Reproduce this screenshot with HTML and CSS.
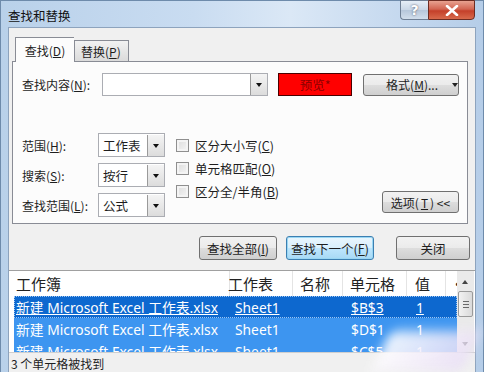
FILE: index.html
```html
<!DOCTYPE html>
<html lang="zh-CN">
<head>
  <meta charset="UTF-8">
  <title>查找和替换</title>
  <link rel="stylesheet" href="styles.css">
</head>
<body>
  <div class="window">
    <!-- Title bar -->
    <div class="titlebar">
      <span class="title">查找和替换</span>
      <div class="caption-btns">
        <div class="cap help">?</div>
        <div class="cap close">
          <svg width="14" height="11" viewBox="0 0 14 11"><path d="M2 1 L12 10 M12 1 L2 10" stroke="#fff" stroke-width="2.6" stroke-linecap="round"/></svg>
        </div>
      </div>
    </div>

    <div class="client">
      <!-- Tabs -->
      <div class="tabs">
        <div class="tab active">查找(<u>D</u>)</div>
        <div class="tab">替换(<u>P</u>)</div>
      </div>

      <div class="panel">
        <div class="find-row">
          <span class="label">查找内容(<u>N</u>):</span>
          <div class="combo wide"><span></span><i class="drop"></i></div>
          <div class="preview">预览*</div>
          <div class="btn format">格式(<u>M</u>)... <b class="arrow"></b></div>
        </div>

        <div class="options">
          <div class="opt-grid">
            <span class="label">范围(<u>H</u>):</span>
            <div class="combo"><span>工作表</span><i class="drop"></i></div>
            <span class="label">搜索(<u>S</u>):</span>
            <div class="combo"><span>按行</span><i class="drop"></i></div>
            <span class="label">查找范围(<u>L</u>):</span>
            <div class="combo"><span>公式</span><i class="drop"></i></div>
          </div>
          <div class="checks">
            <label class="check"><i class="box"></i>区分大小写(<u>C</u>)</label>
            <label class="check"><i class="box"></i>单元格匹配(<u>O</u>)</label>
            <label class="check"><i class="box"></i>区分全/半角(<u>B</u>)</label>
          </div>
          <div class="btn opt-btn">选项(<u>T</u>) &lt;&lt;</div>
        </div>
      </div>

      <!-- Action buttons -->
      <div class="actions">
        <div class="btn act">查找全部(<u>I</u>)</div>
        <div class="btn act default">查找下一个(<u>F</u>)</div>
        <div class="btn act close-btn">关闭</div>
      </div>

      <!-- Results -->
      <div class="results">
        <div class="list">
          <div class="head">
            <div class="col col-book"><span>工作簿</span></div>
            <div class="col col-sheet"><span>工作表</span></div>
            <div class="col col-name"><span>名称</span></div>
            <div class="col col-cell"><span>单元格</span></div>
            <div class="col col-val"><span>值</span></div>
            <div class="col col-more"><span>·</span></div>
          </div>
          <div class="row sel focus">
            <span class="c1">新建 Microsoft Excel 工作表.xlsx</span><span class="c2">Sheet1</span><span class="c3"></span><span class="c4">$B$3</span><span class="c5">1</span>
          </div>
          <div class="row sel">
            <span class="c1">新建 Microsoft Excel 工作表.xlsx</span><span class="c2">Sheet1</span><span class="c3"></span><span class="c4">$D$1</span><span class="c5">1</span>
          </div>
          <div class="row sel">
            <span class="c1">新建 Microsoft Excel 工作表.xlsx</span><span class="c2">Sheet1</span><span class="c3"></span><span class="c4">$C$5</span><span class="c5">1</span>
          </div>
        </div>
        <div class="scrollbar">
          <div class="sb-arrow up"></div>
          <div class="sb-thumb"><i></i><i></i><i></i></div>
          <div class="sb-track"></div>
          <div class="sb-arrow down"></div>
        </div>
      </div>

      <div class="status">3 个单元格被找到</div>
    </div>
    <div class="smudge"></div>
  </div>
</body>
</html>
```

FILE: styles.css
```css
* {
  margin: 0;
  padding: 0;
  box-sizing: border-box;
}
body {
  width: 484px;
  height: 372px;
  overflow: hidden;
  font-family: "Noto Sans CJK SC", "Noto Sans", sans-serif;
  font-size: 12px;
  color: #1e1e1e;
}
u { text-decoration: underline; }

/* Window frame */
.window {
  position: relative;
  width: 484px;
  height: 372px;
  background: linear-gradient(90deg, #b9d1ea 0%, #c9dcf1 40%, #dbe8f6 60%, #c3d7ee 85%, #b5cde8 100%);
  border: 1px solid #6e8bab;
  border-bottom: none;
  padding: 0 7px;
  display: flex;
  flex-direction: column;
}
.titlebar {
  height: 28px;
  display: flex;
  justify-content: space-between;
  align-items: flex-start;
}
.title {
  padding-top: 5px;
  font-size: 12.5px;
  color: #111;
}
.caption-btns {
  display: flex;
  margin-top: -1px;
  margin-right: 1px;
}
.cap {
  height: 20px;
  border: 1px solid #6f7f95;
  display: flex;
  align-items: center;
  justify-content: center;
}
.help {
  width: 28px;
  border-radius: 0 0 0 4px;
  border-right: none;
  background: linear-gradient(#e6eef7, #c9d6e6 50%, #b6c6da 51%, #d2deec);
  color: #fff;
  font: bold 14px "DejaVu Sans", sans-serif;
  text-shadow: 0 0 2px #445;
}
.close {
  width: 47px;
  border-radius: 0 0 4px 0;
  background: linear-gradient(#e8a290, #d26552 45%, #c4402a 55%, #d86a4c);
  border-color: #6d2c22;
}

.client {
  flex: 1;
  background: #f0f0f0;
  border: 1px solid #8da3bd;
  border-bottom: none;
  display: flex;
  flex-direction: column;
}

/* Tabs */
.tabs {
  display: flex;
  margin: 9px 0 0 6px;
  height: 24px;
  align-items: flex-end;
  position: relative;
  z-index: 1;
}
.tab {
  height: 21px;
  padding: 0 6px;
  border: 1px solid #898c95;
  border-bottom: none;
  background: linear-gradient(#f2f2f2, #dbdbdb);
  display: flex;
  align-items: center;
  font-size: 12px;
}
.tab.active {
  height: 25px;
  width: 59px;
  justify-content: center;
  background: #fcfcfc;
  margin-bottom: -1px;
  border-right: none;
}
.tab:not(.active) {
  width: 55px;
  border-left: 1px solid #898c95;
}

.panel {
  margin: 0 7px 0 3px;
  height: 163px;
  border: 1px solid #898c95;
  background: #fcfcfc;
  padding: 11px 8px 0 9px;
}
.label {
  white-space: nowrap;
}

.find-row {
  display: flex;
  align-items: center;
  height: 23px;
}
.find-row .label { width: 80px; }
.combo {
  height: 23px;
  width: 67px;
  border: 1px solid #abadb3;
  background: #fff;
  display: flex;
  align-items: center;
  justify-content: space-between;
  padding-left: 4px;
  font-size: 12.5px;
}
.combo.wide { width: 167px; }
.drop {
  width: 17px;
  height: 21px;
  border-left: 1px solid #9a9a9a;
  background: linear-gradient(#f4f4f4, #dcdcdc);
  position: relative;
}
.drop::after {
  content: "";
  position: absolute;
  left: 5px;
  top: 9px;
  border: 3.5px solid transparent;
  border-top: 4px solid #111;
  border-bottom: none;
}
.preview {
  margin-left: 10px;
  width: 74px;
  height: 23px;
  background: #ff0000;
  border: 1px solid #4a0000;
  color: #8a0000;
  display: flex;
  align-items: center;
  justify-content: center;
  font-size: 12.5px;
}

.btn {
  height: 22px;
  border: 1px solid #707070;
  border-radius: 3px;
  background: linear-gradient(#f2f2f2 0%, #ebebeb 48%, #dddddd 52%, #cfcfcf 100%);
  display: flex;
  align-items: center;
  justify-content: center;
  white-space: nowrap;
}
.format {
  margin-left: 11px;
  width: 96px;
  justify-content: flex-start;
  padding-left: 22px;
}
.arrow {
  margin-left: 14px;
  border: 3px solid transparent;
  border-top: 4px solid #222;
  border-bottom: none;
}

.options {
  display: flex;
  margin-top: 37px;
  align-items: flex-start;
}
.opt-grid {
  display: grid;
  grid-template-columns: 76px 67px;
  row-gap: 6px;
  align-items: center;
}
.opt-grid .combo { height: 24px; }
.checks {
  margin: 4px 0 0 11px;
  display: flex;
  flex-direction: column;
  gap: 7px;
}
.check {
  display: flex;
  align-items: center;
  height: 16px;
  font-size: 12.5px;
}
.box {
  width: 13px;
  height: 13px;
  border: 1px solid #8f8f8f;
  background: linear-gradient(135deg, #dcdcdc, #f6f6f6);
  box-shadow: inset 0 0 0 2px #f4f4f4;
  margin-right: 6px;
}
.opt-btn {
  margin: 58px 0 0 auto;
  width: 77px;
  gap: 2px;
}

/* Action buttons */
.actions {
  display: flex;
  margin: 12px 0 0 190px;
  gap: 9px;
}
.act {
  height: 24px;
  width: 78px;
  font-size: 12.5px;
}
.act.default {
  width: 88px;
  border-color: #3c7fb1;
  box-shadow: inset 0 0 0 1px #9ad7f4;
  background: linear-gradient(#eaf6fd 0%, #d9f0fc 48%, #bee6fd 52%, #a7d9f5 100%);
}
.close-btn {
  margin-left: 13px;
  width: 74px;
}

/* Results list */
.results {
  margin-top: 10px;
  height: 82px;
  background: #fff;
  border-top: 1px solid #a0a0a0;
  display: flex;
}
.list {
  width: 450px;
  overflow: hidden;
  font-family: "Noto Sans", "Noto Sans CJK SC", sans-serif;
  font-size: 13.8px;
}
.head {
  display: flex;
  height: 25px;
  padding-left: 7px;
  font-family: "Noto Sans CJK SC", sans-serif;
  font-size: 15px;
  color: #222;
}
.col {
  flex: none;
  display: flex;
  align-items: center;
  justify-content: flex-start;
  border-right: 1px solid #e4e4e4;
  white-space: nowrap;
}
.col-book { width: 214px; }
.col-sheet { width: 63px; padding-left: 5px; }
.col-sheet span { margin-left: -7px; }
.col-name { width: 50px; padding-left: 7px; }
.col-cell { width: 64px; padding-left: 7px; }
.col-val { width: 39px; padding-left: 8px; }
.col-more { width: 13px; padding-left: 4px; border-right: none; }

.row {
  display: flex;
  height: 22px;
  margin-left: 5px;
  align-items: center;
  white-space: nowrap;
}
.row span {
  flex: none;
  overflow: hidden;
}
.c1 { width: 219px; padding-left: 2px; }
.c2 { width: 63px; padding-left: 2px; }
.c3 { width: 53px; }
.c4 { width: 63px; padding-left: 2px; }
.c5 { width: 30px; padding-left: 4px; }
.sel {
  background: #3d95f0;
  color: #fff;
}
.sel.focus {
  background: #0d68cf;
  outline: 1px dotted #9cc5f2;
  outline-offset: -1px;
}
.sel.focus span { text-decoration: underline; }

.scrollbar {
  width: 17px;
  margin-right: 1px;
  background: #eaeaea;
  display: flex;
  flex-direction: column;
  padding-top: 3px;
}
.sb-arrow {
  height: 17px;
  position: relative;
}
.sb-arrow::after {
  content: "";
  position: absolute;
  left: 5px;
  top: 6px;
  border: 3.5px solid transparent;
}
.sb-arrow.up::after { border-bottom: 4px solid #444; border-top: none; }
.sb-arrow.down::after { border-top: 4px solid #444; border-bottom: none; top: 7px; }
.sb-thumb {
  height: 26px;
  margin: 0 1px;
  border: 1px solid #9a9a9a;
  border-radius: 2px;
  background: linear-gradient(90deg, #f2f2f2, #dadada);
  display: flex;
  flex-direction: column;
  align-items: center;
  justify-content: center;
  gap: 2px;
}
.sb-thumb i {
  width: 6px;
  height: 1px;
  background: #6a6a6a;
}
.sb-track { flex: 1; }

.status {
  flex: 1;
  border-top: 1px solid #cfcfcf;
  padding: 2px 0 0 2px;
  font-size: 12px;
  background: #f0f0f0;
}

/* blurred mark over the lower right corner */
.smudge {
  position: absolute;
  left: 380px;
  top: 330px;
  width: 90px;
  height: 40px;
  background: linear-gradient(110deg, rgba(255,255,255,0.9), rgba(232,220,246,0.8));
  filter: blur(6px);
  transform: skewX(-25deg);
}
```
